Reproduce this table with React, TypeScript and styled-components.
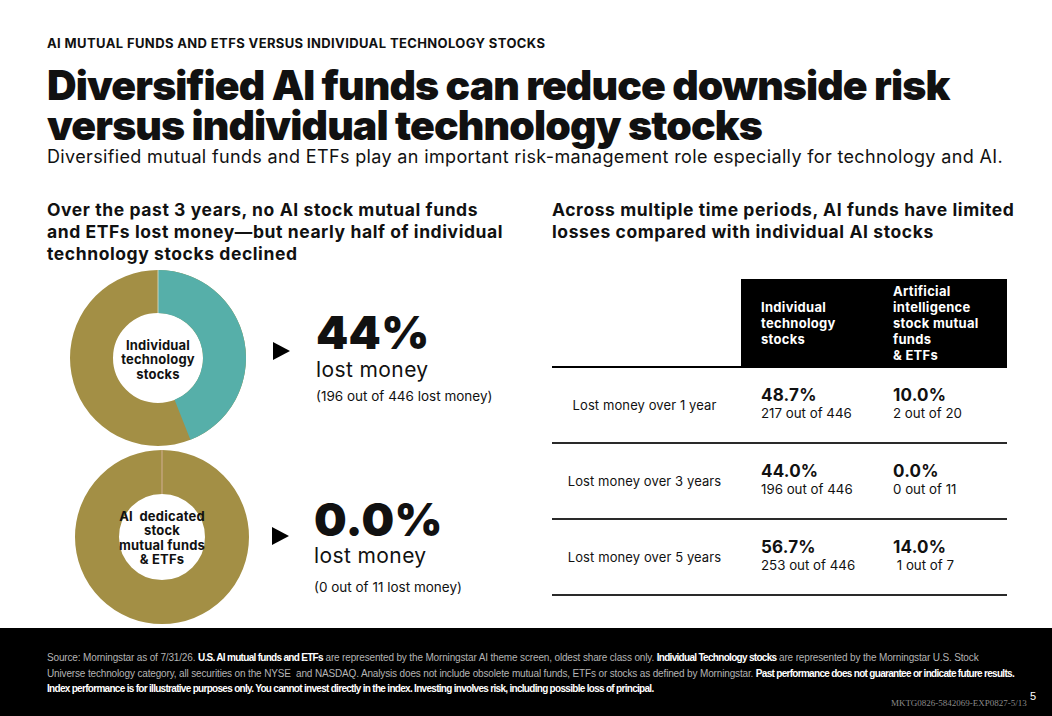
import styled, { createGlobalStyle } from "styled-components";

const GlobalStyle = createGlobalStyle`
  * { box-sizing: border-box; }
  html, body { margin: 0; padding: 0; background: #fff; }
  body { font-family: Inter, "Noto Sans", sans-serif; color: #111; }
`;

const OLIVE = "#a38f45";
const TEAL = "#56afa9";

const polar = (cx: number, cy: number, r: number, deg: number) => {
    const a = ((deg - 90) * Math.PI) / 180;
    return [cx + r * Math.cos(a), cy + r * Math.sin(a)];
};

// ring slice from start to end angle (degrees, clockwise from top)
const slicePath = (c: number, ro: number, ri: number, start: number, end: number) => {
    const large = end - start > 180 ? 1 : 0;
    const [x1, y1] = polar(c, c, ro, start);
    const [x2, y2] = polar(c, c, ro, end);
    const [x3, y3] = polar(c, c, ri, end);
    const [x4, y4] = polar(c, c, ri, start);
    return `M${x1} ${y1} A${ro} ${ro} 0 ${large} 1 ${x2} ${y2} L${x3} ${y3} A${ri} ${ri} 0 ${large} 0 ${x4} ${y4} Z`;
};

interface DonutProps {
    share: number;
    size: number;
    hole: number;
    labelShift: number;
    label: React.ReactNode;
}

const Donut = ({ share, size, hole, labelShift, label }: DonutProps) => {
    const c = size / 2;
    const end = share * 360;
    return (
        <DonutBox $size={size}>
            <svg width={size} height={size} viewBox={`0 0 ${size} ${size}`}>
                <circle cx={c} cy={c} r={(c + hole) / 2} fill="none" stroke={OLIVE} strokeWidth={c - hole} />
                {share > 0 ? (
                    <>
                        <path d={slicePath(c, c, hole, 0, end)} fill={TEAL} />
                        <line x1={c} y1={0} x2={c} y2={c - hole} stroke="#e6dfc4" strokeWidth={0.8} />
                    </>
                ) : (
                    <line x1={c} y1={0} x2={c} y2={c - hole} stroke="#d2ae94" strokeWidth={1} />
                )}
            </svg>
            <DonutLabel $shift={labelShift}>{label}</DonutLabel>
        </DonutBox>
    );
};

const rows = [
    { label: "Lost money over 1 year", a: "48.7%", aSub: "217 out of 446", b: "10.0%", bSub: "2 out of 20" },
    { label: "Lost money over 3 years", a: "44.0%", aSub: "196 out of 446", b: "0.0%", bSub: "0 out of 11" },
    { label: "Lost money over 5 years", a: "56.7%", aSub: "253 out of 446", b: "14.0%", bSub: "\u00a01 out of 7" },
];

const App = () => {
    return (
        <Page>
            <GlobalStyle />
            <Header>
                <Eyebrow>AI MUTUAL FUNDS AND ETFS VERSUS INDIVIDUAL TECHNOLOGY STOCKS</Eyebrow>
                <Headline>
                    Diversified AI funds can reduce downside risk
                    <br />
                    versus individual technology stocks
                </Headline>
                <Lede>
                    Diversified mutual funds and ETFs play an important risk-management role especially for technology and AI.
                </Lede>
            </Header>

            <Columns>
                <LeftCol>
                    <SubHead>
                        Over the past 3 years, no AI stock mutual funds
                        <br />
                        and ETFs lost money—but nearly half of individual
                        <br />
                        technology stocks declined
                    </SubHead>

                    <StatRow $donutPad={23}>
                        <Donut
                            share={0.44}
                            size={176}
                            hole={45}
                            labelShift={3}
                            label={
                                <>
                                    Individual
                                    <br />
                                    technology
                                    <br />
                                    stocks
                                </>
                            }
                        />
                        <Arrow $gap={27} $shift={-7} />
                        <Stat $top={-2} $gap={26}>
                            <BigNumber>44%</BigNumber>
                            <LostMoney $gap={3}>lost money</LostMoney>
                            <Count $gap={6}>(196 out of 446 lost money)</Count>
                        </Stat>
                    </StatRow>

                    <StatRow $donutPad={28}>
                        <Donut
                            share={0}
                            size={174}
                            hole={43}
                            labelShift={1}
                            label={
                                <>
                                    AI&nbsp; dedicated
                                    <br />
                                    stock
                                    <br />
                                    mutual funds
                                    <br />
                                    &amp; ETFs
                                </>
                            }
                        />
                        <Arrow $gap={23} $shift={-1} />
                        <Stat $top={8} $gap={25}>
                            <BigNumber>0.0%</BigNumber>
                            <LostMoney $gap={2}>lost money</LostMoney>
                            <Count $gap={11}>(0 out of 11 lost money)</Count>
                        </Stat>
                    </StatRow>
                </LeftCol>

                <RightCol>
                    <SubHead>
                        Across multiple time periods, AI funds have limited
                        <br />
                        losses compared with individual AI stocks
                    </SubHead>

                    <Table>
                        <HeadBlank />
                        <HeadCell>
                            Individual
                            <br />
                            technology
                            <br />
                            stocks
                        </HeadCell>
                        <HeadCell>
                            Artificial
                            <br />
                            intelligence
                            <br />
                            stock mutual
                            <br />
                            funds
                            <br />
                            &amp; ETFs
                        </HeadCell>
                        {rows.map((r) => (
                            <Row key={r.label}>
                                <RowLabel>{r.label}</RowLabel>
                                <ValueCell>
                                    <Value>{r.a}</Value>
                                    <ValueSub>{r.aSub}</ValueSub>
                                </ValueCell>
                                <ValueCell>
                                    <Value>{r.b}</Value>
                                    <ValueSub>{r.bSub}</ValueSub>
                                </ValueCell>
                            </Row>
                        ))}
                    </Table>
                </RightCol>
            </Columns>

            <Footer>
                <FootNote>
                    <FootLine>
                        Source: Morningstar as of 7/31/26. <b>U.S. AI mutual funds and ETFs</b> are represented by the Morningstar
                        AI theme screen, oldest share class only. <b>Individual Technology stocks</b> are represented by the
                        Morningstar U.S. Stock
                    </FootLine>
                    <FootLine>
                        Universe technology category, all securities on the NYSE&nbsp; and NASDAQ. Analysis does not include
                        obsolete mutual funds, ETFs or stocks as defined by Morningstar.{" "}
                        <b>Past performance does not guarantee or indicate future results.</b>
                    </FootLine>
                    <FootLine>
                        <b>
                            Index performance is for illustrative purposes only. You cannot invest directly in the index. Investing
                            involves risk, including possible loss of principal.
                        </b>
                    </FootLine>
                </FootNote>
                <FootMeta>
                    <Code>MKTG0826-5842069-EXP0827-5/13</Code>
                    <PageNum>5</PageNum>
                </FootMeta>
            </Footer>
        </Page>
    );
};

export default App;

const Page = styled.div`
    width: 1052px;
    height: 716px;
    display: flex;
    flex-direction: column;
    overflow: hidden;
`;

const Header = styled.header`
    padding: 36px 47px 0;
`;

const Eyebrow = styled.div`
    font-size: 13px;
    font-weight: 700;
    line-height: 14px;
    letter-spacing: 0.38px;
`;

const Headline = styled.h1`
    margin: 15px 0 0;
    font-size: 41px;
    font-weight: 900;
    line-height: 40px;
    letter-spacing: -0.9px;
`;

const Lede = styled.p`
    margin: 1px 0 0;
    font-size: 18px;
    line-height: 22px;
    font-weight: 400;
    letter-spacing: 0.35px;
`;

const Columns = styled.div`
    display: grid;
    grid-template-columns: 505px 455px;
    padding: 0 47px;
    margin-top: 31px;
    flex: 1;
`;

const LeftCol = styled.div`
    display: flex;
    flex-direction: column;
`;

const RightCol = styled.div`
    display: flex;
    flex-direction: column;
`;

const SubHead = styled.h2`
    margin: 0;
    font-size: 17.5px;
    font-weight: 700;
    line-height: 22px;
    letter-spacing: 0.58px;
    white-space: nowrap;
`;

const StatRow = styled.div<{ $donutPad: number }>`
    display: flex;
    align-items: center;
    padding-left: ${({ $donutPad }) => $donutPad}px;
    margin-top: 5px;

    & + & {
        margin-top: 4px;
    }
`;

const DonutBox = styled.div<{ $size: number }>`
    position: relative;
    width: ${({ $size }) => $size}px;
    height: ${({ $size }) => $size}px;
    flex-shrink: 0;

    svg {
        display: block;
    }
`;

const DonutLabel = styled.div<{ $shift: number }>`
    position: absolute;
    inset: 0;
    top: ${({ $shift }) => $shift}px;
    display: flex;
    align-items: center;
    justify-content: center;
    text-align: center;
    font-size: 13px;
    font-weight: 700;
    line-height: 14.5px;
    letter-spacing: 0.2px;
    color: #111;
    white-space: nowrap;
`;

const Arrow = styled.div<{ $gap: number; $shift: number }>`
    width: 0;
    height: 0;
    margin-left: ${({ $gap }) => $gap}px;
    position: relative;
    top: ${({ $shift }) => $shift}px;
    border-top: 9px solid transparent;
    border-bottom: 9px solid transparent;
    border-left: 17px solid #000;
    flex-shrink: 0;
`;

const Stat = styled.div<{ $top: number; $gap: number }>`
    margin-left: ${({ $gap }) => $gap}px;
    position: relative;
    top: ${({ $top }) => $top}px;
    display: flex;
    flex-direction: column;
`;

const BigNumber = styled.div`
    font-size: 46px;
    font-weight: 900;
    line-height: 46px;
    letter-spacing: 0.3px;
    color: #111;
`;

const LostMoney = styled.div<{ $gap: number }>`
    font-size: 21px;
    line-height: 24px;
    font-weight: 400;
    letter-spacing: 0.4px;
    margin-top: ${({ $gap }) => $gap}px;
`;

const Count = styled.div<{ $gap: number }>`
    font-size: 13.5px;
    line-height: 16px;
    margin-top: ${({ $gap }) => $gap}px;
`;

const Table = styled.div`
    display: grid;
    grid-template-columns: 189px 132px 134px;
    margin-top: 36px;
`;

const HeadBlank = styled.div`
    border-bottom: 2px solid #000;
`;

const HeadCell = styled.div`
    background: #000;
    color: #fff;
    font-size: 13px;
    font-weight: 700;
    line-height: 16px;
    letter-spacing: 0.3px;
    padding: 0 0 0 20px;
    display: flex;
    align-items: center;
    height: 89px;
    border-bottom: 2px solid #000;
`;

const Row = styled.div`
    display: contents;

    & > * {
        height: 76px;
        border-bottom: 2px solid #2a2a2a;
    }
`;

const RowLabel = styled.div`
    display: flex;
    align-items: center;
    justify-content: center;
    font-size: 13px;
    letter-spacing: 0.1px;
    color: #111;
    padding-right: 4px;
`;

const ValueCell = styled.div`
    display: flex;
    flex-direction: column;
    justify-content: center;
    padding: 0 0 4px 20px;
`;

const Value = styled.div`
    font-size: 17px;
    font-weight: 700;
    line-height: 20px;
    letter-spacing: 0.2px;
`;

const ValueSub = styled.div`
    font-size: 13.3px;
    line-height: 16px;
`;

const Footer = styled.footer`
    background: #000;
    height: 88px;
    flex-shrink: 0;
    padding: 22px 27px 0 47px;
    position: relative;
`;

const FootNote = styled.div`
    font-family: "Liberation Sans", Arial, sans-serif;
    font-size: 10px;
    line-height: 15.5px;
    color: #b4b4b4;
    letter-spacing: -0.15px;

    b {
        color: #fff;
        font-weight: 700;
        letter-spacing: -0.7px;
    }
`;

const FootLine = styled.div`
    white-space: nowrap;
`;

const FootMeta = styled.div`
    position: absolute;
    right: 16px;
    bottom: 8px;
    display: flex;
    align-items: flex-start;
`;

const Code = styled.span`
    font-family: "Liberation Serif", serif;
    font-size: 9px;
    color: #8a8a8a;
    margin-top: 3px;
`;

const PageNum = styled.span`
    font-family: "Liberation Sans", sans-serif;
    font-size: 11px;
    color: #fff;
    margin-left: 3px;
    margin-top: -5px;
`;
